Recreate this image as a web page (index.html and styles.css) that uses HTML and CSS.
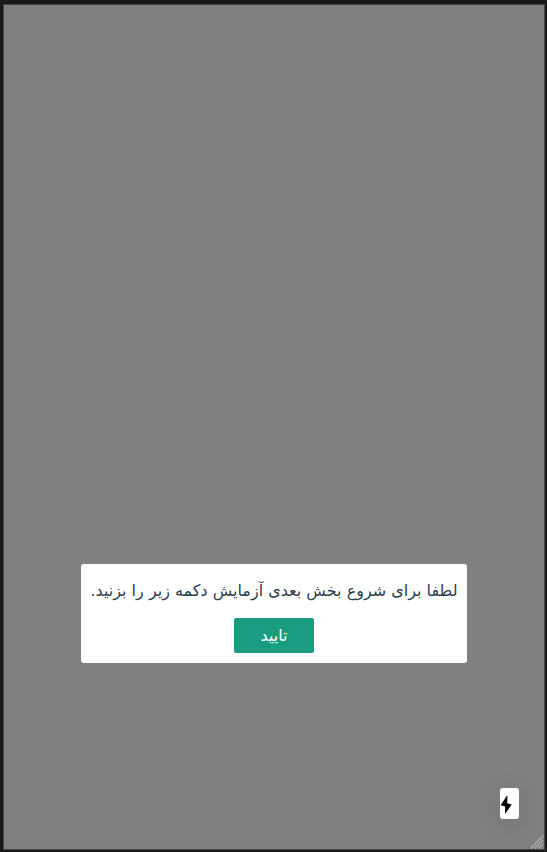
FILE: index.html
```
<!DOCTYPE html>
<html lang="fa" dir="rtl">
<head>
<meta charset="utf-8">
<meta name="viewport" content="width=device-width, initial-scale=1">
<title>آزمایش</title>
<link rel="stylesheet" href="styles.css">
</head>
<body>
<main class="stage">
  <section class="dialog" role="dialog" aria-labelledby="message">
    <p class="message" id="message">لطفا برای شروع بخش بعدی آزمایش دکمه زیر را بزنید.</p>
    <button class="confirm" type="button">تایید</button>
  </section>
  <button class="bolt" type="button" aria-label="اجرای سریع">
    <svg class="bolt-icon" viewBox="0 0 12 19" aria-hidden="true"><path d="M7.4 0 .6 10.2l4.6 1.2L5 19l6.800-9.600-4.600-1.200z"/></svg>
  </button>
  <svg class="grip" viewBox="0 0 14 14" aria-hidden="true"><path d="M1 13 13 1M5 13l8-8M9 13l4-4"/></svg>
</main>
</body>
</html>
```
FILE: styles.css
```
* {
  box-sizing: border-box;
}

body {
  margin: 0;
  min-height: 100vh;
  padding: 4px 2px 2px 3px;
  display: flex;
  background: #1b191b;
  font-family: "DejaVu Sans", sans-serif;
}

.stage {
  position: relative;
  flex: 1;
  display: flex;
  flex-direction: column;
  justify-content: flex-end;
  align-items: center;
  padding: 0 8px 186px;
  border: 1px solid #444346;
  background: #808080;
}

.dialog {
  width: 386px;
  max-width: 100%;
  display: flex;
  flex-direction: column;
  align-items: center;
  gap: 10px;
  padding: 10px 8px;
  border-radius: 3px;
  background: #fff;
}

.message {
  margin: 0;
  color: #2c3e50;
  font-size: 16px;
  line-height: 34px;
}

.confirm {
  width: 80px;
  height: 35px;
  padding: 0;
  border: 0;
  border-radius: 2px;
  background: #1a9c80;
  color: #fff;
  font-family: inherit;
  font-size: 16px;
}

.bolt {
  position: absolute;
  right: 25px;
  bottom: 30px;
  width: 19px;
  height: 31px;
  display: flex;
  align-items: center;
  justify-content: flex-end;
  padding: 1px 0 0;
  border: 0;
  border-radius: 3px;
  background: #fff;
  box-shadow: 0 4px 24px rgba(0, 0, 0, 0.12);
}

.bolt-icon {
  width: 12px;
  height: 19px;
  fill: #000;
}

.grip {
  position: absolute;
  right: 0;
  bottom: 0;
  width: 14px;
  height: 14px;
  fill: none;
  stroke: #bcbcbc;
  stroke-width: 2;
  stroke-dasharray: 1 1;
}
```
